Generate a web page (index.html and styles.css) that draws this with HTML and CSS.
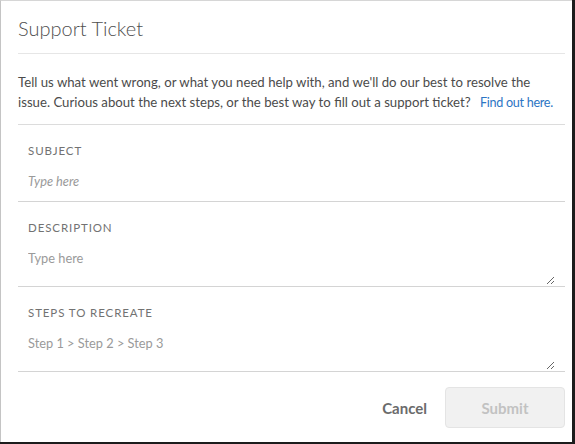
FILE: index.html
```html
<!DOCTYPE html>
<html>
<head>
<meta charset="utf-8">
<link rel="stylesheet" href="styles.css">
</head>
<body>
<div class="dialog">
  <header class="head">
    <h1 class="title">Support Ticket</h1>
  </header>
  <p class="intro"><span>Tell us what went wrong, or what you need help with, and we'll do our best to resolve the issue. Curious about the next steps, or the best way to fill out a support ticket?</span> <a class="link" href="#">Find out here.</a></p>
  <div class="field">
    <label class="label">Subject</label>
    <input class="input" type="text" placeholder="Type here">
  </div>
  <div class="field">
    <label class="label">Description</label>
    <textarea class="area" placeholder="Type here"></textarea>
  </div>
  <div class="field">
    <label class="label">Steps to recreate</label>
    <textarea class="area" placeholder="Step 1 > Step 2 > Step 3"></textarea>
  </div>
  <div class="actions">
    <button class="btn-cancel">Cancel</button>
    <button class="btn-submit" disabled>Submit</button>
  </div>
</div>
</body>
</html>
```
FILE: styles.css
```css
html, body {
  margin: 0;
  padding: 0;
  background: #1c1c1c;
}
.dialog {
  box-sizing: border-box;
  width: 572px;
  height: 442px;
  background: #ffffff;
  border-left: 1px solid #c4c4c4;
  border-top: 1px solid #d6d6d6;
  padding: 0 7px 0 17px;
  font-family: Lato, "Open Sans", sans-serif;
  color: #4b4b4b;
}
.head {
  padding-top: 15px;
  padding-bottom: 13px;
  border-bottom: 1px solid #e6e6e6;
}
.title {
  margin: 0;
  font-size: 20px;
  line-height: 24px;
  font-weight: 300;
  color: #505050;
}
.intro {
  margin: 0;
  padding: 18px 0 12px;
  font-size: 13.2px;
  line-height: 20px;
  color: #4b4b4b;
  border-bottom: 1px solid #dcdcdc;
}
.link {
  margin-left: 6px;
  font-size: 12.6px;
  line-height: 1;
  letter-spacing: -0.3px;
  color: #2c75c4;
  text-decoration: none;
  white-space: nowrap;
}
.field {
  display: flex;
  flex-direction: column;
  padding: 18px 0 0 10px;
  border-bottom: 1px solid #d4d4d4;
}
.label {
  font-size: 11.5px;
  line-height: 16px;
  letter-spacing: 0.9px;
  text-transform: uppercase;
  color: #727272;
}
.input, .area {
  border: none;
  outline: none;
  padding: 0;
  margin: 0;
  font-family: Lato, "Open Sans", sans-serif;
  font-size: 12.8px;
  color: #4b4b4b;
  background: transparent;
}
.input {
  height: 20px;
  line-height: 20px;
  margin-top: 12px;
  margin-bottom: 10px;
}
.input::placeholder {
  font-style: italic;
  color: #9a9a9a;
}
.area {
  margin-top: 12px;
  margin-right: 10px;
  height: 37px;
  line-height: 20px;
  resize: vertical;
  margin-bottom: 1px;
}
.area::placeholder {
  color: #9a9a9a;
}
.actions {
  display: flex;
  justify-content: flex-end;
  align-items: center;
  gap: 18px;
  padding-top: 15px;
}
.btn-cancel {
  border: none;
  background: transparent;
  font-family: Lato, "Open Sans", sans-serif;
  font-weight: 700;
  font-size: 15px;
  color: #6b6b6b;
  padding: 0;
}
.btn-submit {
  box-sizing: border-box;
  width: 120px;
  height: 41px;
  border: 1px solid #e4e4e4;
  border-radius: 4px;
  background: #f1f1f1;
  font-family: Lato, "Open Sans", sans-serif;
  font-weight: 700;
  font-size: 15px;
  color: #c2c2c2;
}
```
